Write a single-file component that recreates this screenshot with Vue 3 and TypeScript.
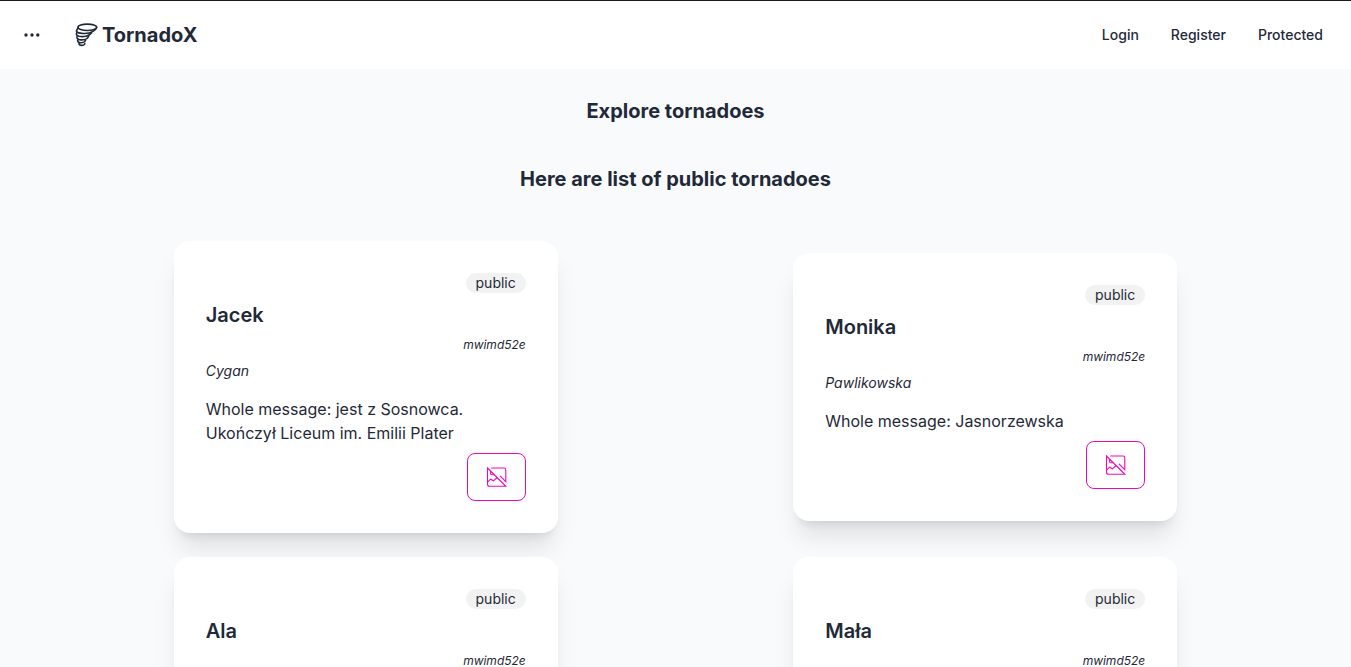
<script setup lang="ts">
interface Tornado {
  name: string
  code: string
  surname?: string
  message?: string
}

const links: string[] = ['Login', 'Register', 'Protected']

const tornadoes: Tornado[] = [
  { name: 'Jacek', surname: 'Cygan', code: 'mwimd52e', message: 'jest z Sosnowca. Ukończył Liceum im. Emilii Plater' },
  { name: 'Monika', surname: 'Pawlikowska', code: 'mwimd52e', message: 'Jasnorzewska' },
  { name: 'Ala', code: 'mwimd52e' },
  { name: 'Mała', code: 'mwimd52e' },
]
</script>

<template>
  <div class="page">
    <header class="navbar">
      <button class="menu" type="button" aria-label="Menu">
        <svg width="20" height="20" viewBox="0 0 20 20" fill="currentColor">
          <circle cx="4" cy="10" r="1.7" />
          <circle cx="10" cy="10" r="1.7" />
          <circle cx="15.8" cy="10" r="1.7" />
        </svg>
      </button>
      <a class="brand" href="#">
        <svg width="24" height="24" viewBox="0 0 24 24" fill="none" stroke="currentColor" stroke-width="1.6" stroke-linecap="round">
          <ellipse cx="13.3" cy="4.3" rx="9.4" ry="3.2" />
          <path d="M3.9 4.6C4.1 5.8 2.4 6.6 2.5 8C3 11 14.5 11.4 19 8.4C21.5 6.8 22.4 5.6 22.7 4.4" />
          <path d="M2.9 9.5C1.9 10.8 2.2 12.6 5 13.3C9.3 14.2 15.4 13.2 17.6 9.8" />
          <path d="M3.2 13.2C2.4 14.5 3 16.1 5.3 16.6C9 17.3 13.2 16.3 14.5 13.6" />
          <path d="M3.8 16.8C3.2 18 3.9 19.2 5.6 19.6C8 20.1 10.9 19.2 11.6 17.2" />
          <path d="M5 20.5C5 21.8 6.2 22.4 7.7 22.4C9.2 22.4 10.5 21.8 10.8 20.6" />
        </svg>
        <span>TornadoX</span>
      </a>
      <nav class="links">
        <a v-for="link in links" :key="link" href="#">{{ link }}</a>
      </nav>
    </header>

    <main>
      <h1 class="heading">Explore tornadoes</h1>
      <h2 class="heading">Here are list of public tornadoes</h2>
      <section class="grid">
        <article v-for="item in tornadoes" :key="item.name" class="card">
          <span class="badge">public</span>
          <h3 class="name">{{ item.name }}</h3>
          <em class="code">{{ item.code }}</em>
          <em v-if="item.surname" class="surname">{{ item.surname }}</em>
          <p v-if="item.message" class="message">Whole message: {{ item.message }}</p>
          <button class="picture" type="button" aria-label="No image">
            <svg width="23" height="24" viewBox="0 0 23 24" fill="none" stroke="currentColor" stroke-width="1.1">
              <path d="M6.2 3H19Q20.8 3 20.8 4.8V16.6L15 10.8" />
              <path d="M2.5 3L20.8 21.3H4.5Q2.5 21.3 2.5 19.3Z" />
              <path d="M2.8 16.8L5.6 14.2L8.4 15.8L12.2 12.5" />
              <path d="M5.6 6.2V9Q6.2 10 8 9.7L9.2 9.4" />
            </svg>
          </button>
        </article>
      </section>
    </main>
  </div>
</template>

<style>
html {
  background: #f9fafc;
}

body {
  margin: 0;
}
</style>

<style scoped>
.page {
  box-sizing: border-box;
  min-height: 100vh;
  background: #f9fafc;
  border-top: 1px solid #18181b;
  color: #1f2937;
  font-family: Inter, "Noto Sans", sans-serif;
  font-size: 16px;
  line-height: 24px;
}

.navbar {
  display: flex;
  align-items: center;
  min-height: 68px;
  padding: 0 28px 0 22px;
  background: #fff;
}

.menu {
  display: flex;
  padding: 0;
  border: 0;
  background: none;
  color: inherit;
  cursor: pointer;
}

.brand {
  display: flex;
  align-items: center;
  gap: 4px;
  margin-left: 32px;
  color: inherit;
  font-size: 20px;
  font-weight: 700;
  line-height: 28px;
  text-decoration: none;
}

.links {
  display: flex;
  gap: 32px;
  margin-left: auto;
}

.links a {
  color: inherit;
  font-size: 14px;
  font-weight: 500;
  line-height: 20px;
  text-decoration: none;
}

.heading {
  margin: 0;
  padding: 28px 0 12px;
  font-size: 20px;
  font-weight: 700;
  line-height: 28px;
  text-align: center;
}

.grid {
  display: grid;
  grid-template-columns: repeat(2, 1fr);
  gap: 24px;
  align-items: center;
  justify-items: center;
  padding: 36px 68px;
}

.card {
  box-sizing: border-box;
  display: flex;
  flex-direction: column;
  gap: 8px;
  width: 384px;
  padding: 32px;
  border-radius: 16px;
  background: #fff;
  box-shadow: 0 20px 25px -5px rgb(0 0 0 / 0.1), 0 8px 10px -6px rgb(0 0 0 / 0.1);
}

.badge {
  align-self: flex-end;
  padding: 0 10px;
  border-radius: 10px;
  background: #f2f2f2;
  font-size: 14px;
  line-height: 20px;
}

.name {
  margin: 0;
  font-size: 20px;
  font-weight: 600;
  line-height: 28px;
}

.code {
  align-self: flex-end;
  font-size: 12px;
  line-height: 16px;
}

.surname {
  font-size: 14px;
  line-height: 20px;
}

.message {
  margin: 8px 0 0;
}

.picture {
  display: flex;
  align-items: center;
  align-self: flex-end;
  height: 48px;
  padding: 0 17px;
  border: 1px solid #ed09bb;
  border-radius: 8px;
  background: transparent;
  color: #ed09bb;
  cursor: pointer;
}
</style>
